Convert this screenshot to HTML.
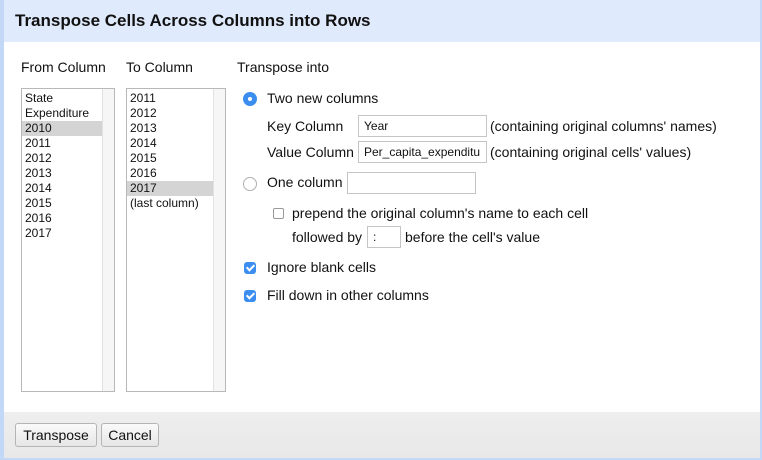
<!DOCTYPE html>
<html><head><style>
*{margin:0;padding:0;box-sizing:border-box}
body{width:762px;height:460px;background:#c3d7f7;font-family:"Liberation Sans",Arial,sans-serif;font-size:14px;color:#111;position:relative;overflow:hidden}
#dlg{position:absolute;left:4px;top:0;width:756px;height:458px;background:#fff}
#hd{position:absolute;left:0;top:0;width:756px;height:42px;background:#dfeafc;font-weight:bold;font-size:17px;padding:11px 0 0 11px}
#ft{position:absolute;left:0;top:412px;width:756px;height:46px;background:linear-gradient(#eeeeee,#e8e8e8)}
.a{position:absolute;white-space:nowrap}
.list{position:absolute;border:1px solid #b8b8b8;background:#fff;font-size:12px}
.list .sb{position:absolute;right:0;top:0;bottom:0;width:12px;background:#f6f6f6;border-left:1px solid #e2e2e2}
.list div.r{height:15px;line-height:15px;padding-left:3px}
.sel{background:#d4d4d4}
.inp{position:absolute;border:1px solid #c5c5c5;background:#fff;font-size:12px;padding:3px 0 0 5px;height:22px}
.btn{position:absolute;top:423px;height:24px;border:1px solid #b5b5b5;border-radius:3px;background:linear-gradient(#fafafa,#e6e6e6);font-size:14px;line-height:22px;text-align:center}
.cb{position:absolute;width:12px;height:12px;border-radius:3px;background:#3b8ef0}
.cb:after{content:"";position:absolute;left:4px;top:1px;width:3px;height:6px;border:solid #fff;border-width:0 2px 2px 0;transform:rotate(45deg)}
</style></head><body>
<div id="dlg">
<div id="hd">Transpose Cells Across Columns into Rows</div>
<div class="a" style="left:17px;top:59px">From Column</div>
<div class="a" style="left:122px;top:59px">To Column</div>
<div class="a" style="left:233px;top:59px">Transpose into</div>
<div class="list" style="left:17px;top:88px;width:94px;height:304px"><div class="sb"></div><div style="padding-top:2px;width:81px">
<div class="r">State</div><div class="r">Expenditure</div><div class="r sel">2010</div><div class="r">2011</div><div class="r">2012</div><div class="r">2013</div><div class="r">2014</div><div class="r">2015</div><div class="r">2016</div><div class="r">2017</div></div></div>
<div class="list" style="left:122px;top:88px;width:100px;height:304px"><div class="sb"></div><div style="padding-top:2px;width:87px">
<div class="r">2011</div><div class="r">2012</div><div class="r">2013</div><div class="r">2014</div><div class="r">2015</div><div class="r">2016</div><div class="r sel">2017</div><div class="r">(last column)</div></div></div>

<div class="a" style="left:239px;top:92px;width:14px;height:14px;border-radius:50%;background:#3b8ef0"><div style="position:absolute;left:5px;top:5px;width:4px;height:4px;border-radius:50%;background:#fff"></div></div>
<div class="a" style="left:263px;top:90px">Two new columns</div>
<div class="a" style="left:263px;top:118px">Key Column</div>
<div class="inp" style="left:354px;top:115px;width:129px">Year</div>
<div class="a" style="left:486px;top:118px">(containing original columns' names)</div>
<div class="a" style="left:263px;top:144px">Value Column</div>
<div class="inp" style="left:354px;top:141px;width:129px;overflow:hidden">Per_capita_expenditu</div>
<div class="a" style="left:486px;top:144px">(containing original cells' values)</div>
<div class="a" style="left:239px;top:177px;width:14px;height:14px;border-radius:50%;border:1px solid #b0b0b0;background:#fff"></div>
<div class="a" style="left:263px;top:174px">One column</div>
<div class="inp" style="left:343px;top:172px;width:129px"></div>
<div class="a" style="left:269px;top:208px;width:11px;height:11px;border:1px solid #999;border-radius:2px"></div>
<div class="a" style="left:288px;top:205px">prepend the original column's name to each cell</div>
<div class="a" style="left:288px;top:229px">followed by</div>
<div class="inp" style="left:363px;top:226px;width:34px">:</div>
<div class="a" style="left:401px;top:229px">before the cell's value</div>
<div class="cb" style="left:240px;top:262px"></div>
<div class="a" style="left:263px;top:259px">Ignore blank cells</div>
<div class="cb" style="left:240px;top:290px"></div>
<div class="a" style="left:263px;top:287px">Fill down in other columns</div>
<div id="ft"></div>
<div class="btn" style="left:11px;width:82px">Transpose</div>
<div class="btn" style="left:97px;width:58px">Cancel</div>
</div>
</body></html>
